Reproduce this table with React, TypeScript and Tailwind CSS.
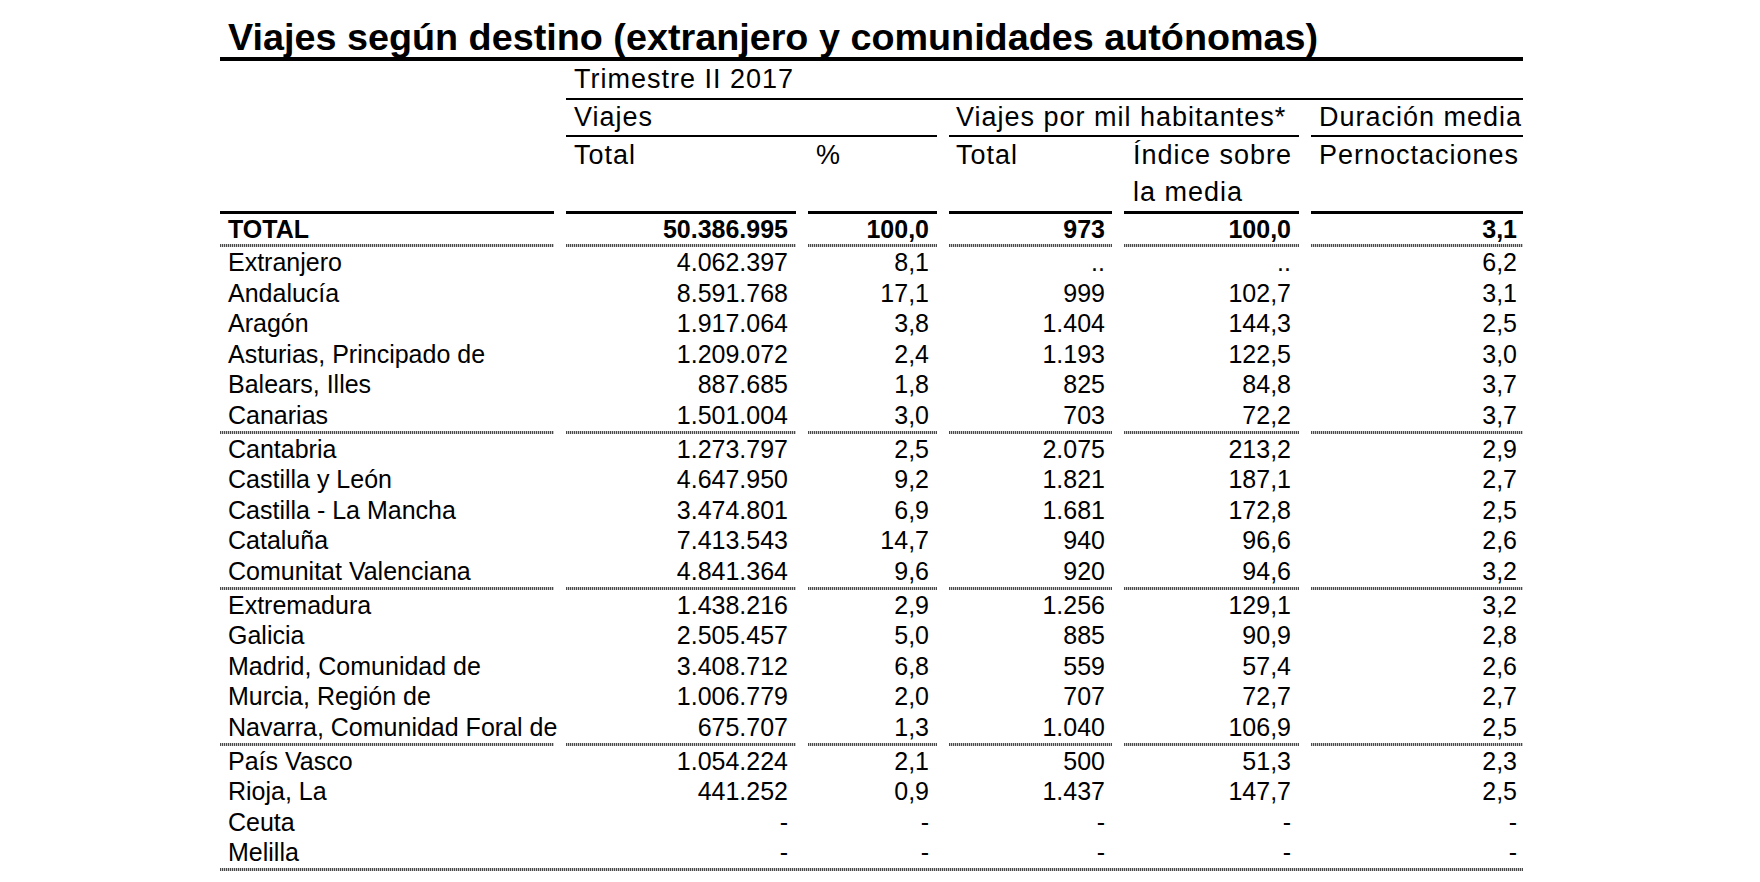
import React from "react";

type Row = [string, string, string, string, string, string];

const groups: Row[][] = [
  [
    ["Extranjero", "4.062.397", "8,1", "..", "..", "6,2"],
    ["Andalucía", "8.591.768", "17,1", "999", "102,7", "3,1"],
    ["Aragón", "1.917.064", "3,8", "1.404", "144,3", "2,5"],
    ["Asturias, Principado de", "1.209.072", "2,4", "1.193", "122,5", "3,0"],
    ["Balears, Illes", "887.685", "1,8", "825", "84,8", "3,7"],
    ["Canarias", "1.501.004", "3,0", "703", "72,2", "3,7"],
  ],
  [
    ["Cantabria", "1.273.797", "2,5", "2.075", "213,2", "2,9"],
    ["Castilla y León", "4.647.950", "9,2", "1.821", "187,1", "2,7"],
    ["Castilla - La Mancha", "3.474.801", "6,9", "1.681", "172,8", "2,5"],
    ["Cataluña", "7.413.543", "14,7", "940", "96,6", "2,6"],
    ["Comunitat Valenciana", "4.841.364", "9,6", "920", "94,6", "3,2"],
  ],
  [
    ["Extremadura", "1.438.216", "2,9", "1.256", "129,1", "3,2"],
    ["Galicia", "2.505.457", "5,0", "885", "90,9", "2,8"],
    ["Madrid, Comunidad de", "3.408.712", "6,8", "559", "57,4", "2,6"],
    ["Murcia, Región de", "1.006.779", "2,0", "707", "72,7", "2,7"],
    ["Navarra, Comunidad Foral de", "675.707", "1,3", "1.040", "106,9", "2,5"],
  ],
  [
    ["País Vasco", "1.054.224", "2,1", "500", "51,3", "2,3"],
    ["Rioja, La", "441.252", "0,9", "1.437", "147,7", "2,5"],
    ["Ceuta", "-", "-", "-", "-", "-"],
    ["Melilla", "-", "-", "-", "-", "-"],
  ],
];

const total: Row = ["TOTAL", "50.386.995", "100,0", "973", "100,0", "3,1"];

const pad = ["pl-2", "pr-2", "pr-2", "pr-[7px]", "pr-2", "pr-[6px]"];

function DataRow({ row, bold }: { row: Row; bold?: boolean }) {
  return (
    <>
      {row.map((v, i) => (
        <div
          key={i}
          className={
            "h-[30.6px] leading-[30.6px] whitespace-nowrap text-[25px] " +
            (i === 0 ? "text-left " : "text-right ") +
            pad[i] +
            (bold ? " font-bold" : "")
          }
        >
          {v}
        </div>
      ))}
    </>
  );
}

function Sep() {
  return (
    <>
      {[0, 1, 2, 3, 4, 5].map((i) => (
        <div
          key={i}
          className="h-[3px] bg-[repeating-linear-gradient(90deg,#4a4a4a_0px,#4a4a4a_1px,#c8c8c8_1px,#c8c8c8_2px)]"
        />
      ))}
    </>
  );
}

export default function App() {
  return (
    <div className="min-h-[882px] w-[1760px] bg-white text-black font-['Liberation_Sans',Arial,sans-serif]">
      <div className="ml-[220px] w-[1303px]">
        <div className="pt-[16.5px] pl-2 text-[37.75px] font-bold leading-[40px] whitespace-nowrap border-b-4 border-black">
          Viajes según destino (extranjero y comunidades autónomas)
        </div>
        <div className="grid grid-cols-[334px_230px_129px_163px_175px_212px] gap-x-3">
          {/* header row 1 */}
          <div />
          <div className="col-span-5 h-[39px] border-b-2 border-black pl-2 text-[27px] tracking-[1px] leading-[37px] whitespace-nowrap">
            Trimestre II 2017
          </div>
          {/* header row 2 */}
          <div />
          <div className="col-span-2 h-[37px] border-b-2 border-black pl-2 text-[27px] tracking-[1px] leading-[35px] whitespace-nowrap">
            Viajes
          </div>
          <div className="col-span-2 h-[37px] border-b-2 border-black pl-[7px] text-[27px] tracking-[1px] leading-[35px] whitespace-nowrap">
            Viajes por mil habitantes*
          </div>
          <div className="h-[37px] border-b-2 border-black pl-2 text-[27px] tracking-[1px] leading-[35px] whitespace-nowrap">
            Duración media
          </div>
          {/* header row 3 */}
          <div className="h-[77px] border-b-[3px] border-black" />
          <div className="h-[77px] border-b-[3px] border-black pl-2 text-[27px] tracking-[1px] leading-[37px]">
            Total
          </div>
          <div className="h-[77px] border-b-[3px] border-black pl-2 text-[27px] tracking-[1px] leading-[37px]">
            %
          </div>
          <div className="h-[77px] border-b-[3px] border-black pl-[7px] text-[27px] tracking-[1px] leading-[37px]">
            Total
          </div>
          <div className="h-[77px] border-b-[3px] border-black pl-[9px] text-[27px] tracking-[1px] leading-[37px] whitespace-nowrap">
            Índice sobre
            <br />
            la media
          </div>
          <div className="h-[77px] border-b-[3px] border-black pl-2 text-[27px] tracking-[1px] leading-[37px] whitespace-nowrap">
            Pernoctaciones
          </div>

          <DataRow row={total} bold />
          <Sep />
          {groups.map((g, gi) => (
            <React.Fragment key={gi}>
              {g.map((r, ri) => (
                <DataRow key={ri} row={r} />
              ))}
              {gi < groups.length - 1 ? <Sep /> : null}
            </React.Fragment>
          ))}
          <div className="col-span-6 h-[3px] bg-[repeating-linear-gradient(90deg,#4a4a4a_0px,#4a4a4a_1px,#c8c8c8_1px,#c8c8c8_2px)]" />
        </div>
      </div>
    </div>
  );
}
